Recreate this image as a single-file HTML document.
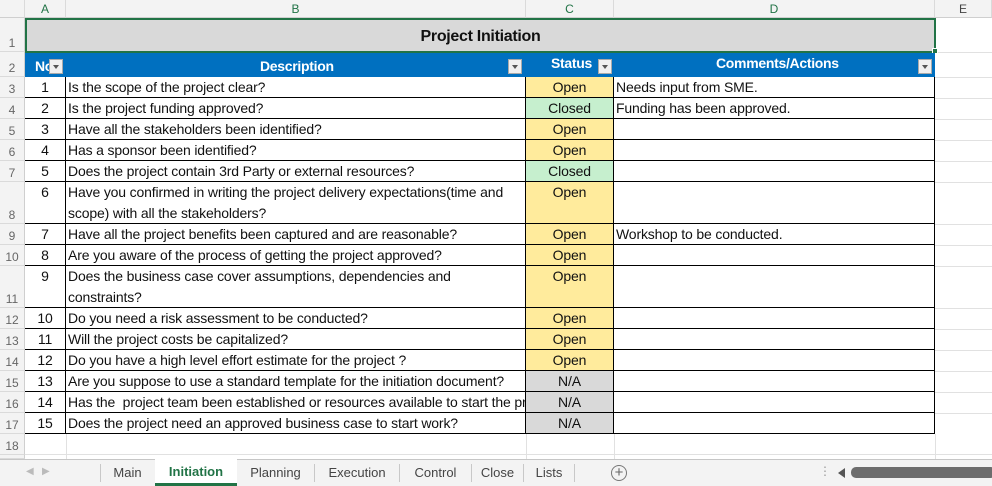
<!DOCTYPE html>
<html><head><meta charset="utf-8"><style>
*{margin:0;padding:0;box-sizing:border-box}
body{width:992px;height:486px;overflow:hidden;background:#fff;font-family:"Liberation Sans",Arial,sans-serif;position:relative}
.a{position:absolute}
.ch{top:0;height:18px;background:#f3f3f3;border-bottom:1px solid #cfcfcf;border-right:1px solid #dadada;font-size:12px;color:#217346;text-align:center;line-height:18px}
.rh{left:0;width:25px;background:#f3f3f3;border-bottom:1px solid #dadada;border-right:1px solid #cfcfcf;font-size:12px;color:#666;text-align:center;display:flex;align-items:flex-end;justify-content:center;padding-bottom:1px}
.row{left:25px;width:910px;display:flex}
.row div{border-right:1px solid #000;border-bottom:1px solid #000;font-size:14px;line-height:21px;color:#111;letter-spacing:-0.15px;white-space:nowrap;overflow:hidden}
.c1{width:41px;text-align:center}
.c2{width:460px;padding-left:2px}
.c3{width:88px;text-align:center}
.c4{width:321px;padding-left:2px}
.o{background:#ffeb9c}.g{background:#c6efce}.n{background:#d9d9d9}
.fb{position:absolute;top:6px;width:14px;height:15px;background:#f0f0f0;border:1px solid #aaa}
.fb:after{content:"";position:absolute;left:3px;top:5px;border-left:3.5px solid transparent;border-right:3.5px solid transparent;border-top:4px solid #555}
.gl{background:#e1e1e1}
.tab{position:absolute;top:459px;height:27px;font-size:13px;color:#444;line-height:27px;text-align:center}
.sep{position:absolute;top:464px;width:1px;height:18px;background:#c8c8c8}
</style></head><body>
<div class="a ch" style="left:0;width:25px;background:#f3f3f3"></div>
<div class="a ch" style="left:25px;width:41px">A</div>
<div class="a ch" style="left:66px;width:460px">B</div>
<div class="a ch" style="left:526px;width:88px">C</div>
<div class="a ch" style="left:614px;width:321px">D</div>
<div class="a ch" style="left:935px;width:57px;color:#444">E</div>
<div class="a rh" style="top:18px;height:34px">1</div>
<div class="a rh" style="top:52px;height:25px">2</div>
<div class="a rh" style="top:77px;height:21px">3</div>
<div class="a rh" style="top:98px;height:21px">4</div>
<div class="a rh" style="top:119px;height:21px">5</div>
<div class="a rh" style="top:140px;height:21px">6</div>
<div class="a rh" style="top:161px;height:21px">7</div>
<div class="a rh" style="top:182px;height:42px">8</div>
<div class="a rh" style="top:224px;height:21px">9</div>
<div class="a rh" style="top:245px;height:21px">10</div>
<div class="a rh" style="top:266px;height:42px">11</div>
<div class="a rh" style="top:308px;height:21px">12</div>
<div class="a rh" style="top:329px;height:21px">13</div>
<div class="a rh" style="top:350px;height:21px">14</div>
<div class="a rh" style="top:371px;height:21px">15</div>
<div class="a rh" style="top:392px;height:21px">16</div>
<div class="a rh" style="top:413px;height:21px">17</div>
<div class="a rh" style="top:434px;height:21px">18</div>
<div class="a rh" style="top:455px;height:4px"></div>
<div class="a gl" style="left:935px;top:52px;width:57px;height:1px"></div>
<div class="a gl" style="left:935px;top:77px;width:57px;height:1px"></div>
<div class="a gl" style="left:935px;top:98px;width:57px;height:1px"></div>
<div class="a gl" style="left:935px;top:119px;width:57px;height:1px"></div>
<div class="a gl" style="left:935px;top:140px;width:57px;height:1px"></div>
<div class="a gl" style="left:935px;top:161px;width:57px;height:1px"></div>
<div class="a gl" style="left:935px;top:182px;width:57px;height:1px"></div>
<div class="a gl" style="left:935px;top:224px;width:57px;height:1px"></div>
<div class="a gl" style="left:935px;top:245px;width:57px;height:1px"></div>
<div class="a gl" style="left:935px;top:266px;width:57px;height:1px"></div>
<div class="a gl" style="left:935px;top:308px;width:57px;height:1px"></div>
<div class="a gl" style="left:935px;top:329px;width:57px;height:1px"></div>
<div class="a gl" style="left:935px;top:350px;width:57px;height:1px"></div>
<div class="a gl" style="left:935px;top:371px;width:57px;height:1px"></div>
<div class="a gl" style="left:935px;top:392px;width:57px;height:1px"></div>
<div class="a gl" style="left:935px;top:413px;width:57px;height:1px"></div>
<div class="a gl" style="left:25px;top:454px;width:967px;height:1px"></div>
<div class="a gl" style="left:66px;top:434px;width:1px;height:25px"></div>
<div class="a gl" style="left:526px;top:434px;width:1px;height:25px"></div>
<div class="a gl" style="left:614px;top:434px;width:1px;height:25px"></div>
<div class="a gl" style="left:935px;top:434px;width:1px;height:25px"></div>
<div class="a" style="left:25px;top:18px;width:911px;height:35px;background:#d9d9d9;border:2px solid #217346;text-align:center;font-weight:bold;font-size:16px;line-height:33px;color:#111;letter-spacing:-0.3px">Project Initiation</div>
<div class="a" style="left:932px;top:48px;width:6px;height:6px;background:#217346;border:1px solid #fff"></div>
<div class="a" style="left:25px;top:53px;width:910px;height:24px;background:#0070c0;color:#fff;font-weight:bold;font-size:14px;letter-spacing:-0.3px">
<span class="a" style="left:10px;top:5px">No</span>
<span class="a" style="left:235px;top:5px">Description</span>
<span class="a" style="left:526px;top:2px">Status</span>
<span class="a" style="left:691px;top:2px">Comments/Actions</span>
<div class="fb" style="left:24px"></div>
<div class="fb" style="left:483px"></div>
<div class="fb" style="left:573px"></div>
<div class="fb" style="left:893px"></div>
</div>
<div class="a row" style="top:77px;height:21px"><div class="c1">1</div><div class="c2">Is the scope of the project clear?</div><div class="c3 o">Open</div><div class="c4">Needs input from SME.</div></div>
<div class="a row" style="top:98px;height:21px"><div class="c1">2</div><div class="c2">Is the project funding approved?</div><div class="c3 g">Closed</div><div class="c4">Funding has been approved.</div></div>
<div class="a row" style="top:119px;height:21px"><div class="c1">3</div><div class="c2">Have all the stakeholders been identified?</div><div class="c3 o">Open</div><div class="c4"></div></div>
<div class="a row" style="top:140px;height:21px"><div class="c1">4</div><div class="c2">Has a sponsor been identified?</div><div class="c3 o">Open</div><div class="c4"></div></div>
<div class="a row" style="top:161px;height:21px"><div class="c1">5</div><div class="c2">Does the project contain 3rd Party or external resources?</div><div class="c3 g">Closed</div><div class="c4"></div></div>
<div class="a row" style="top:182px;height:42px"><div class="c1">6</div><div class="c2">Have you confirmed in writing the project delivery expectations(time and<br>scope) with all the stakeholders?</div><div class="c3 o">Open</div><div class="c4"></div></div>
<div class="a row" style="top:224px;height:21px"><div class="c1">7</div><div class="c2">Have all the project benefits been captured and are reasonable?</div><div class="c3 o">Open</div><div class="c4">Workshop to be conducted.</div></div>
<div class="a row" style="top:245px;height:21px"><div class="c1">8</div><div class="c2">Are you aware of the process of getting the project approved?</div><div class="c3 o">Open</div><div class="c4"></div></div>
<div class="a row" style="top:266px;height:42px"><div class="c1">9</div><div class="c2">Does the business case cover assumptions, dependencies and<br>constraints?</div><div class="c3 o">Open</div><div class="c4"></div></div>
<div class="a row" style="top:308px;height:21px"><div class="c1">10</div><div class="c2">Do you need a risk assessment to be conducted?</div><div class="c3 o">Open</div><div class="c4"></div></div>
<div class="a row" style="top:329px;height:21px"><div class="c1">11</div><div class="c2">Will the project costs be capitalized?</div><div class="c3 o">Open</div><div class="c4"></div></div>
<div class="a row" style="top:350px;height:21px"><div class="c1">12</div><div class="c2">Do you have a high level effort estimate for the project ?</div><div class="c3 o">Open</div><div class="c4"></div></div>
<div class="a row" style="top:371px;height:21px"><div class="c1">13</div><div class="c2">Are you suppose to use a standard template for the initiation document?</div><div class="c3 n">N/A</div><div class="c4"></div></div>
<div class="a row" style="top:392px;height:21px"><div class="c1">14</div><div class="c2">Has the&nbsp; project team been established or resources available to start the project?</div><div class="c3 n">N/A</div><div class="c4"></div></div>
<div class="a row" style="top:413px;height:21px"><div class="c1">15</div><div class="c2">Does the project need an approved business case to start work?</div><div class="c3 n">N/A</div><div class="c4"></div></div>
<div class="a" style="left:0;top:459px;width:992px;height:27px;background:#f3f3f3;border-top:1px solid #c6c6c6"></div>
<div class="a" style="left:26px;top:466px;font-size:10px;color:#bbb">&#9664;</div>
<div class="a" style="left:42px;top:466px;font-size:10px;color:#bbb">&#9654;</div>
<div class="sep" style="left:100px"></div>
<div class="tab" style="left:101px;width:53px">Main</div>
<div class="tab" style="left:155px;width:82px;background:#fff;color:#217346;font-weight:bold;border-bottom:3px solid #217346;line-height:26px">Initiation</div>
<div class="tab" style="left:237px;width:77px">Planning</div>
<div class="sep" style="left:314px"></div>
<div class="tab" style="left:315px;width:84px">Execution</div>
<div class="sep" style="left:399px"></div>
<div class="tab" style="left:400px;width:71px">Control</div>
<div class="sep" style="left:471px"></div>
<div class="tab" style="left:472px;width:51px">Close</div>
<div class="sep" style="left:523px"></div>
<div class="tab" style="left:524px;width:50px">Lists</div>
<div class="sep" style="left:574px"></div>
<div class="a" style="left:611px;top:465px;width:16px;height:16px;border:1px solid #777;border-radius:50%;text-align:center;line-height:13px;font-size:15px;color:#666">+</div>
<div class="a" style="left:819px;top:464px;font-size:12px;color:#999">&#8942;</div>
<div class="a" style="left:838px;top:468px;border-top:5px solid transparent;border-bottom:5px solid transparent;border-right:7px solid #555"></div>
<div class="a" style="left:851px;top:467px;width:145px;height:11px;background:#6d6d6d;border-radius:5px"></div>
</body></html>
